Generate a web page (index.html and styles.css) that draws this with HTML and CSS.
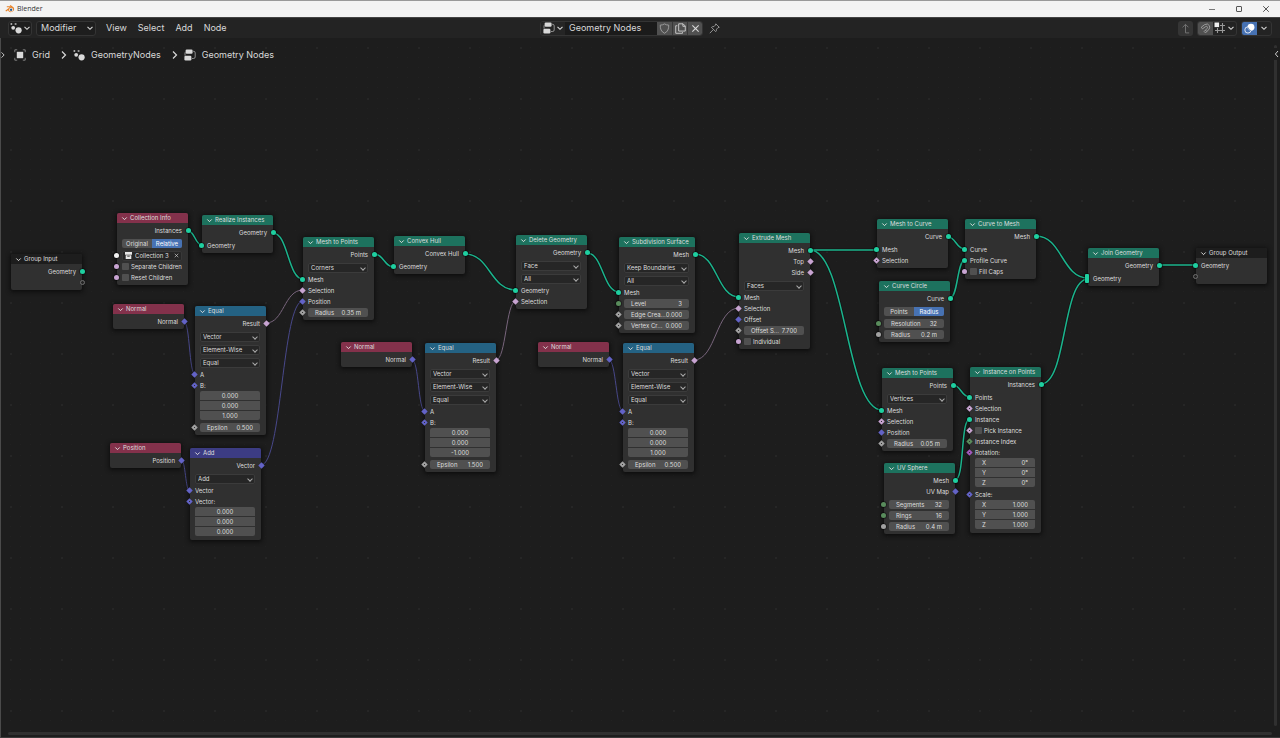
FILE: index.html
```html
<!DOCTYPE html>
<html lang="en">
<head>
<meta charset="utf-8">
<title>Blender</title>
<link rel="stylesheet" href="styles.css">
</head>
<body>
<svg class="defs" aria-hidden="true">
  <symbol id="i-chevron" viewBox="0 0 8 8"><path d="M1.5 2.8L4 5.3L6.5 2.8" fill="none" stroke="currentColor" stroke-width="1.1"/></symbol>
  <symbol id="i-right" viewBox="0 0 8 10"><path d="M2 1.5L5.5 5L2 8.5" fill="none" stroke="currentColor" stroke-width="1.2"/></symbol>
  <symbol id="i-cross" viewBox="0 0 10 10"><path d="M1.5 1.5L8.5 8.5M8.5 1.5L1.5 8.5" fill="none" stroke="currentColor" stroke-width="1.2"/></symbol>
  <symbol id="i-geo" viewBox="0 0 12 12"><circle cx="8.6" cy="8.3" r="3.1" fill="currentColor"/><circle cx="3.2" cy="5.8" r="1.9" fill="currentColor"/><circle cx="1.4" cy="2" r="1" fill="currentColor" opacity=".8"/><circle cx="5.6" cy="2" r="1.1" fill="currentColor" opacity=".7"/></symbol>
  <symbol id="i-tree" viewBox="0 0 12 12"><rect x="1.6" y=".6" width="7" height="4.2" rx="1.2" fill="currentColor"/><rect x=".4" y="6.8" width="7" height="4.6" rx="1.2" fill="currentColor"/><path d="M9 2.3h.6q1.6 0 1.6 1.6v4q0 1.6-1.6 1.6H8M1 3.4v3.2" fill="none" stroke="currentColor" stroke-width="1" opacity=".6"/></symbol>
  <symbol id="i-object" viewBox="0 0 12 12"><rect x="2.8" y="2.8" width="6.4" height="6.4" fill="currentColor"/><path d="M.8 3.2V.8h2.4M8.8.8h2.4v2.4M11.2 8.8v2.4H8.8M3.2 11.2H.8V8.8" fill="none" stroke="currentColor" opacity=".5"/></symbol>
</svg>

<main class="canvas">
  <svg class="links" aria-hidden="true">
    <defs>
      <pattern id="grid" x="10" y="46" width="51" height="51" patternUnits="userSpaceOnUse">
        <path class="dots" d="M0 1.5h51M0 11.5h51M0 21.5h51M0 31.5h51M0 41.5h51" stroke-dasharray="1 9 1 9 1 9 1 9 1 10"/>
        <rect class="dot" x="0" y="1" width="2" height="2"/>
      </pattern>
      <g id="wires">
        <path d="M188 231C195 231 195 245 202 245"/><path d="M273 233C288 233 288 279 303 279"/><path d="M374 254C384 254 384 267 394 267"/><path d="M465 254C490 254 490 290 516 290"/><path d="M587 253C603 253 603 292 619 292"/><path d="M695 254C717 254 717 297 739 297"/><path d="M810 250H877"/><path d="M810 250C846 250 846 410 882 410"/><path d="M948 237C956 237 956 249 965 249"/><path d="M950 298C958 298 957 260 965 260"/><path d="M953 385C961 385 961 397 970 397"/><path d="M955 480C965 480 960 419 970 419"/><path d="M1036 236C1062 236 1062 278 1088 278"/><path d="M1041 384C1067 384 1062 279 1088 279"/><path d="M1159 265H1196"/>
      </g>
    </defs>
    <rect width="100%" height="100%" fill="url(#grid)"/>
    <use class="shade" href="#wires"/>
    <use class="wire geo" href="#wires"/>
    <g class="wire bool">
      <path d="M266 323C284 323 284 290 303 290"/><path d="M496 360C506 360 506 301 516 301"/><path d="M694 360C716 360 716 308 739 308"/>
    </g>
    <g class="wire vec">
      <path d="M184 322C190 322 189 374 195 374"/><path d="M181 460C186 460 185 491 190 491"/><path d="M261 465C282 465 282 301 303 301"/><path d="M412 360C419 360 418 411 425 411"/><path d="M609 360C616 360 616 411 623 411"/>
    </g>
  </svg>

  <section class="node dark" style="left:11px;top:254px">
    <h2><svg><use href="#i-chevron"/></svg>Group Input</h2>
    <p class="row out">Geometry<i class="socket geo"></i></p>
    <p class="row out"><i class="socket empty"></i></p>
  </section>

  <section class="node input" style="left:117px;top:213px">
    <h2><svg><use href="#i-chevron"/></svg>Collection Info</h2>
    <p class="row out">Instances<i class="socket geo"></i></p>
    <div class="choices"><button>Original</button><button class="on">Relative</button></div>
    <div class="row"><i class="socket white"></i><div class="picker"><svg viewBox="0 0 8 8"><path d="M0 0h8v3H0zM.8 3.6h6.4V8H.8z" fill="#e6e6e6"/><path d="M2.6 4.8h2.8" stroke="#282828"/></svg><input value="Collection 3" aria-label="Collection"><button aria-label="Clear collection"><svg><use href="#i-cross"/></svg></button></div></div>
    <label class="row"><i class="socket bool"></i><input type="checkbox">Separate Children</label>
    <label class="row"><i class="socket bool"></i><input type="checkbox">Reset Children</label>
  </section>

  <section class="node geometry" style="left:202px;top:215px">
    <h2><svg><use href="#i-chevron"/></svg>Realize Instances</h2>
    <p class="row out">Geometry<i class="socket geo"></i></p>
    <p class="row first"><i class="socket geo"></i>Geometry</p>
  </section>

  <section class="node input" style="left:113px;top:304px">
    <h2><svg><use href="#i-chevron"/></svg>Normal</h2>
    <p class="row out">Normal<i class="socket diamond vec"></i></p>
  </section>

  <section class="node compare" style="left:195px;top:306px">
    <h2><svg><use href="#i-chevron"/></svg>Equal</h2>
    <p class="row out">Result<i class="socket diamond bool"></i></p>
    <div class="menus"><div class="menu"><select aria-label="Data type"><option>Vector</option></select></div><div class="menu"><select aria-label="Mode"><option>Element-Wise</option></select></div><div class="menu"><select aria-label="Operation"><option>Equal</option></select></div></div>
    <p class="row"><i class="socket diamond vec"></i>A</p>
    <p class="row"><i class="socket diamond vec dotted"></i>B:</p>
    <div class="values"><input value="0.000" aria-label="B X"><input value="0.000" aria-label="B Y"><input value="1.000" aria-label="B Z"></div>
    <div class="row"><i class="socket diamond float dotted"></i><label class="field">Epsilon<input value="0.500"></label></div>
  </section>

  <section class="node input" style="left:110px;top:443px">
    <h2><svg><use href="#i-chevron"/></svg>Position</h2>
    <p class="row out">Position<i class="socket diamond vec"></i></p>
  </section>

  <section class="node vector" style="left:190px;top:448px">
    <h2><svg><use href="#i-chevron"/></svg>Add</h2>
    <p class="row out">Vector<i class="socket diamond vec"></i></p>
    <div class="menus"><div class="menu"><select aria-label="Operation"><option>Add</option></select></div></div>
    <p class="row"><i class="socket diamond vec"></i>Vector</p>
    <p class="row"><i class="socket diamond vec dotted"></i>Vector:</p>
    <div class="values"><input value="0.000" aria-label="Vector X"><input value="0.000" aria-label="Vector Y"><input value="0.000" aria-label="Vector Z"></div>
  </section>

  <section class="node geometry" style="left:303px;top:237px">
    <h2><svg><use href="#i-chevron"/></svg>Mesh to Points</h2>
    <p class="row out">Points<i class="socket geo"></i></p>
    <div class="menus"><div class="menu"><select aria-label="Mode"><option>Corners</option></select></div></div>
    <p class="row"><i class="socket geo"></i>Mesh</p>
    <p class="row"><i class="socket diamond bool"></i>Selection</p>
    <p class="row"><i class="socket diamond vec"></i>Position</p>
    <div class="row"><i class="socket diamond float dotted"></i><label class="field">Radius<input value="0.35 m"></label></div>
  </section>

  <section class="node geometry" style="left:394px;top:236px">
    <h2><svg><use href="#i-chevron"/></svg>Convex Hull</h2>
    <p class="row out">Convex Hull<i class="socket geo"></i></p>
    <p class="row first"><i class="socket geo"></i>Geometry</p>
  </section>

  <section class="node input" style="left:341px;top:342px">
    <h2><svg><use href="#i-chevron"/></svg>Normal</h2>
    <p class="row out">Normal<i class="socket diamond vec"></i></p>
  </section>

  <section class="node compare" style="left:425px;top:343px">
    <h2><svg><use href="#i-chevron"/></svg>Equal</h2>
    <p class="row out">Result<i class="socket diamond bool"></i></p>
    <div class="menus"><div class="menu"><select aria-label="Data type"><option>Vector</option></select></div><div class="menu"><select aria-label="Mode"><option>Element-Wise</option></select></div><div class="menu"><select aria-label="Operation"><option>Equal</option></select></div></div>
    <p class="row"><i class="socket diamond vec"></i>A</p>
    <p class="row"><i class="socket diamond vec dotted"></i>B:</p>
    <div class="values"><input value="0.000" aria-label="B X"><input value="0.000" aria-label="B Y"><input value="-1.000" aria-label="B Z"></div>
    <div class="row"><i class="socket diamond float dotted"></i><label class="field">Epsilon<input value="1.500"></label></div>
  </section>

  <section class="node geometry" style="left:516px;top:235px">
    <h2><svg><use href="#i-chevron"/></svg>Delete Geometry</h2>
    <p class="row out">Geometry<i class="socket geo"></i></p>
    <div class="menus"><div class="menu"><select aria-label="Domain"><option>Face</option></select></div><div class="menu"><select aria-label="Mode"><option>All</option></select></div></div>
    <p class="row"><i class="socket geo"></i>Geometry</p>
    <p class="row"><i class="socket diamond bool"></i>Selection</p>
  </section>

  <section class="node input" style="left:538px;top:342px">
    <h2><svg><use href="#i-chevron"/></svg>Normal</h2>
    <p class="row out">Normal<i class="socket diamond vec"></i></p>
  </section>

  <section class="node geometry wide" style="left:619px;top:237px">
    <h2><svg><use href="#i-chevron"/></svg>Subdivision Surface</h2>
    <p class="row out">Mesh<i class="socket geo"></i></p>
    <div class="menus"><div class="menu"><select aria-label="UV smooth"><option>Keep Boundaries</option></select></div><div class="menu"><select aria-label="Boundary smooth"><option>All</option></select></div></div>
    <p class="row"><i class="socket geo"></i>Mesh</p>
    <div class="row"><i class="socket int"></i><label class="field">Level<input value="3"></label></div>
    <div class="row"><i class="socket diamond float dotted"></i><label class="field">Edge Crea...<input value="0.000"></label></div>
    <div class="row"><i class="socket diamond float dotted"></i><label class="field">Vertex Cr...<input value="0.000"></label></div>
  </section>

  <section class="node compare" style="left:623px;top:343px">
    <h2><svg><use href="#i-chevron"/></svg>Equal</h2>
    <p class="row out">Result<i class="socket diamond bool"></i></p>
    <div class="menus"><div class="menu"><select aria-label="Data type"><option>Vector</option></select></div><div class="menu"><select aria-label="Mode"><option>Element-Wise</option></select></div><div class="menu"><select aria-label="Operation"><option>Equal</option></select></div></div>
    <p class="row"><i class="socket diamond vec"></i>A</p>
    <p class="row"><i class="socket diamond vec dotted"></i>B:</p>
    <div class="values"><input value="0.000" aria-label="B X"><input value="0.000" aria-label="B Y"><input value="1.000" aria-label="B Z"></div>
    <div class="row"><i class="socket diamond float dotted"></i><label class="field">Epsilon<input value="0.500"></label></div>
  </section>

  <section class="node geometry" style="left:739px;top:233px">
    <h2><svg><use href="#i-chevron"/></svg>Extrude Mesh</h2>
    <p class="row out">Mesh<i class="socket geo"></i></p>
    <p class="row out">Top<i class="socket diamond bool"></i></p>
    <p class="row out">Side<i class="socket diamond bool"></i></p>
    <div class="menus"><div class="menu"><select aria-label="Mode"><option>Faces</option></select></div></div>
    <p class="row"><i class="socket geo"></i>Mesh</p>
    <p class="row"><i class="socket diamond bool"></i>Selection</p>
    <p class="row"><i class="socket diamond vec"></i>Offset</p>
    <div class="row"><i class="socket diamond float dotted"></i><label class="field">Offset S...<input value="7.700"></label></div>
    <label class="row"><i class="socket bool"></i><input type="checkbox">Individual</label>
  </section>

  <section class="node geometry" style="left:877px;top:219px">
    <h2><svg><use href="#i-chevron"/></svg>Mesh to Curve</h2>
    <p class="row out">Curve<i class="socket geo"></i></p>
    <p class="row first"><i class="socket geo"></i>Mesh</p>
    <p class="row"><i class="socket diamond bool dotted"></i>Selection</p>
  </section>

  <section class="node geometry" style="left:879px;top:281px">
    <h2><svg><use href="#i-chevron"/></svg>Curve Circle</h2>
    <p class="row out">Curve<i class="socket geo"></i></p>
    <div class="choices"><button>Points</button><button class="on">Radius</button></div>
    <div class="row"><i class="socket int"></i><label class="field">Resolution<input value="32"></label></div>
    <div class="row"><i class="socket float"></i><label class="field">Radius<input value="0.2 m"></label></div>
  </section>

  <section class="node geometry" style="left:965px;top:219px">
    <h2><svg><use href="#i-chevron"/></svg>Curve to Mesh</h2>
    <p class="row out">Mesh<i class="socket geo"></i></p>
    <p class="row first"><i class="socket geo"></i>Curve</p>
    <p class="row"><i class="socket geo"></i>Profile Curve</p>
    <label class="row"><i class="socket bool"></i><input type="checkbox">Fill Caps</label>
  </section>

  <section class="node geometry" style="left:882px;top:368px">
    <h2><svg><use href="#i-chevron"/></svg>Mesh to Points</h2>
    <p class="row out">Points<i class="socket geo"></i></p>
    <div class="menus"><div class="menu"><select aria-label="Mode"><option>Vertices</option></select></div></div>
    <p class="row"><i class="socket geo"></i>Mesh</p>
    <p class="row"><i class="socket diamond bool dotted"></i>Selection</p>
    <p class="row"><i class="socket diamond vec"></i>Position</p>
    <div class="row"><i class="socket diamond float dotted"></i><label class="field">Radius<input value="0.05 m"></label></div>
  </section>

  <section class="node geometry" style="left:884px;top:463px">
    <h2><svg><use href="#i-chevron"/></svg>UV Sphere</h2>
    <p class="row out">Mesh<i class="socket geo"></i></p>
    <p class="row out">UV Map<i class="socket diamond vec"></i></p>
    <div class="row first"><i class="socket int"></i><label class="field">Segments<input value="32"></label></div>
    <div class="row"><i class="socket int"></i><label class="field">Rings<input value="16"></label></div>
    <div class="row"><i class="socket float"></i><label class="field">Radius<input value="0.4 m"></label></div>
  </section>

  <section class="node geometry" style="left:970px;top:367px">
    <h2><svg><use href="#i-chevron"/></svg>Instance on Points</h2>
    <p class="row out">Instances<i class="socket geo"></i></p>
    <p class="row first"><i class="socket geo"></i>Points</p>
    <p class="row"><i class="socket diamond bool dotted"></i>Selection</p>
    <p class="row"><i class="socket geo"></i>Instance</p>
    <label class="row"><i class="socket diamond bool dotted"></i><input type="checkbox">Pick Instance</label>
    <p class="row"><i class="socket diamond int dotted"></i>Instance Index</p>
    <p class="row"><i class="socket diamond rotation dotted"></i>Rotation:</p>
    <div class="values named"><label>X<input value="0°"></label><label>Y<input value="0°"></label><label>Z<input value="0°"></label></div>
    <p class="row"><i class="socket diamond vec dotted"></i>Scale:</p>
    <div class="values named"><label>X<input value="1.000"></label><label>Y<input value="1.000"></label><label>Z<input value="1.000"></label></div>
  </section>

  <section class="node geometry" style="left:1088px;top:248px">
    <h2><svg><use href="#i-chevron"/></svg>Join Geometry</h2>
    <p class="row out">Geometry<i class="socket geo"></i></p>
    <p class="row first"><i class="socket geo multi"></i>Geometry</p>
  </section>

  <section class="node dark" style="left:1196px;top:248px">
    <h2><svg><use href="#i-chevron"/></svg>Group Output</h2>
    <p class="row"><i class="socket geo"></i>Geometry</p>
    <p class="row"><i class="socket empty"></i></p>
  </section>
</main>

<div class="titlebar">
  <svg class="logo" viewBox="0 0 10 8"><path d="M.3 5.7L4.7 2.2H1.8V1.3h4L4.7.4l.8-.4 3.2 2.6A3 3 0 1 1 3 5.2L1.2 6.4z" fill="#e8832a"/><circle cx="6.1" cy="4.7" r="1.9" fill="#fff"/><circle cx="6.1" cy="4.7" r="1.2" fill="#2a5f94"/></svg>
  <span>Blender</span>
  <div class="window-buttons">
    <button aria-label="Minimize"><svg viewBox="0 0 8 8"><path d="M1 4.5h6" stroke="#777"/></svg></button>
    <button aria-label="Maximize"><svg viewBox="0 0 8 8"><rect x="1.5" y="1.5" width="5" height="5" rx=".5" fill="none" stroke="#555"/></svg></button>
    <button aria-label="Close"><svg viewBox="0 0 8 8"><path d="M1.2 1.2l5.6 5.6M6.8 1.2L1.2 6.8" stroke="#444" stroke-width=".9"/></svg></button>
  </div>
</div>

<header class="toolbar">
  <div class="left">
    <button class="boxed" aria-label="Editor type"><svg class="icon"><use href="#i-geo"/></svg><svg class="chev"><use href="#i-chevron"/></svg></button>
    <div class="mode"><select aria-label="Node tree type"><option>Modifier</option></select><svg class="chev"><use href="#i-chevron"/></svg></div>
    <nav><button>View</button><button>Select</button><button>Add</button><button>Node</button></nav>
  </div>
  <div class="middle">
    <div class="datablock">
      <button class="browse" aria-label="Browse node tree"><svg class="icon"><use href="#i-tree"/></svg><svg class="chev"><use href="#i-chevron"/></svg></button>
      <input value="Geometry Nodes" aria-label="Node tree name">
      <button class="tool" aria-label="Fake user"><svg viewBox="0 0 12 12"><path d="M6 1Q8 2.3 10.6 2.3C10.8 6.5 9.5 9.5 6 11.2C2.5 9.5 1.2 6.5 1.4 2.3Q4 2.3 6 1z" fill="none" stroke="#aaa" stroke-width=".9"/></svg></button>
      <button class="tool" aria-label="New node tree"><svg viewBox="0 0 12 12"><path d="M4 .9h4.8l2.4 2.4v5.5H4zM8.6 1v2.6h2.5M2.6 3H.8v8.2h7.4V10" fill="none" stroke="#ddd" stroke-width=".9"/></svg></button>
      <button class="tool" aria-label="Unlink"><svg class="small"><use href="#i-cross"/></svg></button>
    </div>
    <button class="plain" aria-label="Pin"><svg viewBox="0 0 12 12"><path d="M7.4.9L11.2 4.7L9.8 5.1L8.2 6.8Q8.5 8.4 7.3 9.4L2.7 4.8Q3.8 3.6 5.4 3.9L7 2.3zM4.6 7.3L.9 11.1" fill="none" stroke="#aaa" stroke-width=".9"/></svg></button>
  </div>
  <div class="right">
    <button class="parent" aria-label="Go to parent"><svg viewBox="0 0 12 12"><path d="M10 10.8H6V1.5M2.8 4.7L6 1.5L9.2 4.7" fill="none" stroke="#777"/></svg></button>
    <div class="pair">
      <button class="tool" aria-label="Snap"><svg viewBox="0 0 12 12"><path d="M1.4 4.6L5 1.8Q8.5-.2 10.3 3Q11.4 5.5 9.2 7.5L6 10.8L4.5 9.3L7.6 6.1Q8.7 4.9 7.8 3.9Q7 3.2 5.8 4.1L2.7 6.4zM5.9 7.7L7.4 9.3" fill="none" stroke="#aaa" stroke-width=".9"/></svg></button>
      <button class="snap" aria-label="Snapping"><svg class="icon" viewBox="0 0 12 12"><path d="M8.5 1v10M3.5 6v5M6 3.5h5M1 8.5h10" stroke="#999" stroke-width="1.1"/><rect x=".5" y=".5" width="4.6" height="4.6" fill="#eee"/></svg><svg class="chev"><use href="#i-chevron"/></svg></button>
    </div>
    <div class="pair last">
      <button class="tool overlay" aria-label="Show overlays"><svg viewBox="0 0 12 12"><circle cx="7.6" cy="4.6" r="3.8" fill="#fff"/><circle cx="4.3" cy="7.6" r="3.4" fill="none" stroke="#fff" stroke-width=".9"/><path d="M4.2 4.8A3.7 3.7 0 0 0 7.3 8.2" fill="none" stroke="#4772b3"/></svg></button>
      <button class="drop" aria-label="Overlays"><svg class="chev"><use href="#i-chevron"/></svg></button>
    </div>
  </div>
</header>

<nav class="path" aria-label="Path">
  <svg class="toggle"><use href="#i-right"/></svg>
  <span><svg class="icon"><use href="#i-object"/></svg>Grid</span>
  <svg class="sep"><use href="#i-right"/></svg>
  <span><svg class="icon"><use href="#i-geo"/></svg>GeometryNodes</span>
  <svg class="sep"><use href="#i-right"/></svg>
  <span><svg class="icon"><use href="#i-tree"/></svg>Geometry Nodes</span>
</nav>
<div class="scroll-y"></div>
<button class="sidebar-toggle" aria-label="Show sidebar"><svg viewBox="0 0 5 8"><path d="M4 1L1.4 4L4 7" fill="none" stroke="#ccc"/></svg></button>
<div class="scroll-x"></div>
</body>
</html>
```
FILE: styles.css
```css
* { box-sizing: border-box; }
body {
  position: relative;
  display: flex;
  flex-direction: column;
  min-height: 100vh;
  margin: 0;
  overflow: hidden;
  background: #1d1d1d;
  color: #d9d9d9;
  font: 9px/12px Inter, sans-serif;
}
button, input, select { font: inherit; color: inherit; margin: 0; padding: 0; border: 0; background: none; min-width: 0; border-radius: 0; outline: 0; }
select { appearance: none; }
button { display: flex; align-items: center; justify-content: center; }
svg { display: block; flex: none; }
.defs { position: absolute; width: 0; height: 0; }
.icon { width: 12px; height: 12px; }
.chev { width: 8px; height: 8px; }

/* Window title */
.titlebar {
  position: relative;
  display: flex;
  align-items: center;
  height: 18px;
  padding: 0 10px 0 5px;
  gap: 2px;
  border-top: 1px solid #999;
  border-bottom: 1px solid #444;
  background: #f3f3f3;
  color: #333;
  font-size: 7px;
}
.titlebar span { font-family: "Open Sans", sans-serif; }
.logo { width: 10px; height: 8px; }
.window-buttons { display: flex; gap: 19px; margin-left: auto; }
.window-buttons svg { width: 8px; height: 8px; }

/* Editor header */
.toolbar {
  position: relative;
  display: grid;
  grid-template-columns: 1fr auto 1fr;
  align-items: center;
  height: 20px;
  padding: 0 8px;
  background: #232323;
}
.left, .middle, .right, .datablock, .pair, .toolbar nav { display: flex; align-items: center; }
.left { gap: 4px; }
.boxed, .mode, .datablock, .pair { height: 15px; border: 1px solid #343434; border-radius: 3px; }
.boxed { width: 24px; gap: 1px; background: #1e1e1e; }
.mode { display: flex; align-items: center; width: 60px; padding: 0 1px 0 4px; background: #1e1e1e; }
.mode select { flex: 1; }
.toolbar nav { gap: 11px; margin-left: 6px; }
.middle { gap: 6px; padding-right: 20px; }
.datablock { background: #1b1b1b; overflow: hidden; }
.browse { width: 24px; gap: 1px; background: #252525; height: 13px; }
.datablock input { width: 92px; padding-left: 4px; }
.tool { width: 15px; height: 13px; background: #505050; }
.tool + .tool { border-left: 1px solid #383838; }
.tool svg, .plain svg, .parent svg { width: 11px; height: 11px; }
.tool .small { width: 9px; height: 9px; }
.right { justify-content: flex-end; gap: 4px; }
.parent { width: 15px; height: 15px; border-radius: 3px; background: #353535; }
.pair { overflow: hidden; }
.snap { width: 23px; gap: 1px; }
.drop { width: 14px; }
.tool.overlay { background: #4772b3; }

/* Breadcrumb */
.path { position: relative; display: flex; align-items: center; height: 34px; gap: 10px; }
.path span { display: flex; align-items: center; gap: 6px; }
.path .sep { width: 8px; height: 10px; margin-right: -5px; }
.path .toggle { width: 6px; height: 8px; margin-right: -2px; }

/* Region edges */
.scroll-y { position: absolute; top: 45px; right: 3px; bottom: 12px; width: 3px; background: #303030; border-radius: 2px; }
.scroll-x { position: absolute; left: 8px; right: 8px; bottom: 3px; height: 3px; background: #303030; border-radius: 2px; }
.sidebar-toggle { position: absolute; right: 1px; top: 48px; width: 6px; height: 12px; background: #1d1d1d; }
.sidebar-toggle svg { width: 5px; height: 8px; }

/* Node canvas */
.canvas { position: absolute; inset: 0; border-left: 1px solid #4a4a4a; border-bottom: 1px solid #3a3a3a; font-size: 6px; line-height: 11px; color: #dedede; }
.links { position: absolute; left: -1px; top: 0; width: 100%; height: 100%; }
.dots { stroke: #212121; }
.dot { fill: #262626; }
.wire, .shade { fill: none; }
.shade { stroke: #141414; stroke-width: 3; }
.wire.geo { stroke: #1bb48d; stroke-width: 1.5; }
.wire.bool { stroke: #78657c; }
.wire.vec { stroke: #48488a; }

.node {
  position: absolute;
  width: 71px;
  margin-left: -1px;
  padding-bottom: 2px;
  border-radius: 2px;
  background: #303030;
  box-shadow: 0 1px 4px 1px #0d0d0d;
}
.node.wide { width: 76px; }
.node h2 {
  display: flex;
  align-items: center;
  gap: 2px;
  height: 10px;
  margin: 0 0 2px;
  padding-left: 4px;
  border-radius: 2px 2px 0 0;
  font: inherit;
  line-height: 10px;
  white-space: nowrap;
}
.node h2 svg { width: 7px; height: 7px; }
.geometry h2 { background: #1d725e; }
.input h2 { background: #83314b; }
.compare h2 { background: #246283; }
.vector h2 { background: #3c3c83; }
.dark h2 { background: #1d1d1d; }

.row { position: relative; display: flex; align-items: center; height: 11px; margin: 0; padding: 0 6px 0 5px; white-space: nowrap; }
.row.out { justify-content: flex-end; }
.row.first { margin-top: 2px; }

.socket { position: absolute; left: -3px; top: 3px; width: 5px; height: 5px; border-radius: 50%; background: var(--c); box-shadow: 0 0 0 1px rgba(0, 0, 0, .35); }
.out .socket { left: auto; right: -3px; }
.socket.diamond { border-radius: 0; clip-path: polygon(50% 4%, 96% 50%, 50% 96%, 4% 50%); width: 7px; height: 7px; left: -4px; top: 2px; }
.out .socket.diamond { left: auto; right: -4px; }
.socket.dotted { background: linear-gradient(#303030, #303030) center / 1px 1px no-repeat var(--c); }
.socket.multi { height: 9px; width: 4px; top: 1px; border-radius: 1px; }
.socket.empty { border: 1px solid #707070; background: #232323; box-shadow: none; }
.geo { --c: #1ecfa0; }
.vec { --c: #6363c7; }
.bool { --c: #c8a4d2; }
.float { --c: #a1a1a1; }
.int { --c: #598c5c; }
.rotation { --c: #a058bd; }
.white { --c: #f2f2f2; }

.menus { display: flex; flex-direction: column; gap: 3px; margin: 3px 6px 1px 5px; }
.menu { position: relative; display: flex; height: 10px; border: 1px solid #3b3b3b; border-radius: 2px; background: #262626; }
.menu select { flex: 1; padding-left: 2px; line-height: 8px; }
.menu::after { content: ""; position: absolute; right: 2px; top: 2px; width: 3px; height: 3px; border: solid #aaa; border-width: 0 1px 1px 0; transform: rotate(45deg); pointer-events: none; }

.choices { display: flex; height: 9px; margin: 3px 6px 2px 5px; border-radius: 2px; overflow: hidden; background: #505050; }
.choices button { flex: 1; line-height: 9px; }
.choices .on { background: #4772b3; color: #fff; }

.field { display: flex; align-items: center; justify-content: space-between; flex: 1; min-width: 0; height: 9px; padding: 0 7px; border-radius: 2px; background: #505050; line-height: 9px; }
.field input { width: 20px; height: 9px; text-align: right; }
.values { display: flex; flex-direction: column; gap: 1px; height: 29px; margin: 0 6px 2px 5px; border-radius: 2px; overflow: hidden; }
.values > * { flex: 1; width: 100%; text-align: center; background: #505050; line-height: 9px; }
.named label { display: flex; align-items: center; justify-content: space-between; padding: 0 7px; }
.named input { width: 30px; height: 9px; text-align: right; }
.row input[type="checkbox"] { appearance: none; width: 7px; height: 7px; margin-right: 2px; border-radius: 1px; background: #505050; }
.picker { display: flex; align-items: center; flex: 1; gap: 3px; height: 10px; padding: 0 2px; border: 1px solid #383838; border-radius: 2px; background: #262626; }
.picker > svg { width: 7px; height: 7px; }
.picker input { flex: 1; width: 20px; height: 8px; }
.picker button svg { width: 5px; height: 5px; }
```
